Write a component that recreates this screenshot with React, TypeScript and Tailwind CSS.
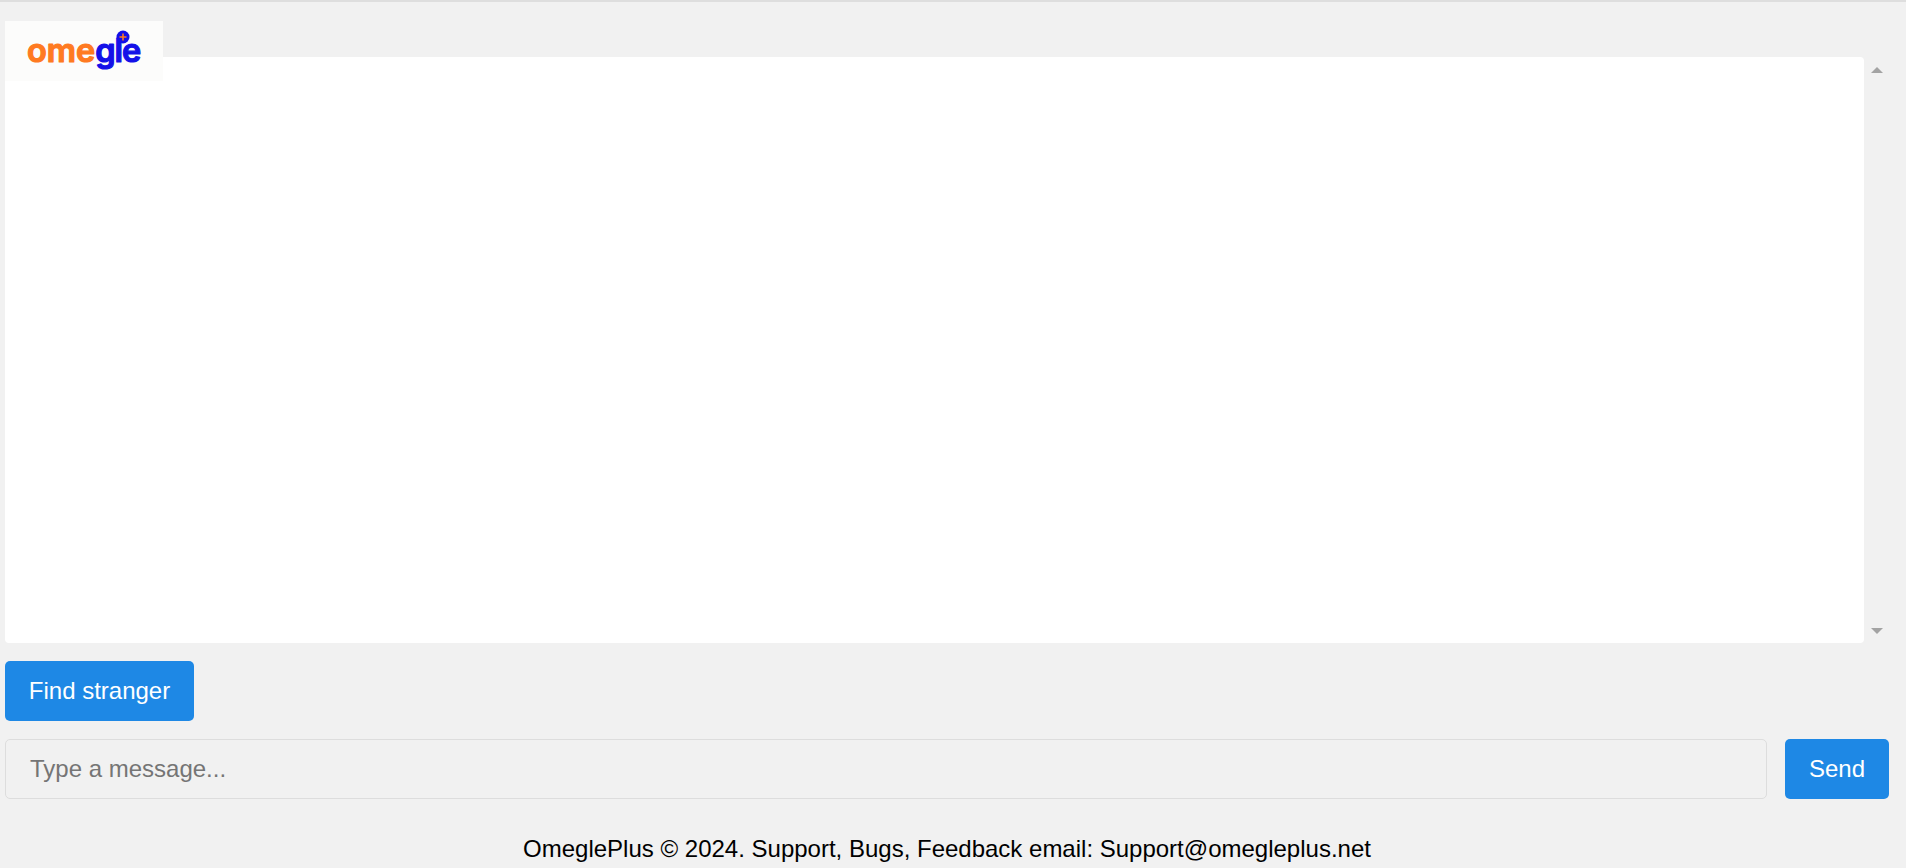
export default function App() {
  return (
    <div className="relative h-[868px] overflow-hidden border-t-2 border-[#dedede] bg-[#f1f1f1] pl-[5px] pr-[17px] pt-[55px] font-['Liberation_Sans',Arial,sans-serif] text-black">
      <div className="absolute left-[5px] top-[19px] flex h-[60px] w-[158px] items-center justify-center bg-[#fcfcfb]">
        <svg width="158" height="60" viewBox="0 0 158 60" aria-label="omegle logo">
          <text x="22" y="41" fontFamily="Inter, sans-serif" fontSize="32.5" fontWeight="600" strokeWidth="1.2" strokeLinejoin="round">
            <tspan fill="#ff7a21" stroke="#ff7a21">ome</tspan>
            <tspan fill="#1410e8" stroke="#1410e8" letterSpacing="-1">gle</tspan>
          </text>
          <circle cx="118" cy="16" r="6.5" fill="#1410e8" />
          <path d="M114.5 16h7M118 12.5v7" stroke="#ff7a21" strokeWidth="1.6" />
        </svg>
      </div>
      <div className="flex h-[586px]">
        <div className="flex-1 rounded-[4px] bg-white" />
        <div className="flex w-[25px] flex-col items-center justify-between bg-[#f1f1f1] pb-[9px] pt-[10px]">
          <svg width="12" height="6" viewBox="0 0 12 6"><path d="M6 0l6 6H0z" fill="#a3a3a3" /></svg>
          <svg width="12" height="6" viewBox="0 0 12 6"><path d="M0 0h12L6 6z" fill="#a3a3a3" /></svg>
        </div>
      </div>
      <button className="mt-[18px] block h-[60px] w-[189px] rounded-[5px] bg-[#1e88e5] text-[24px] leading-[60px] text-white">Find stranger</button>
      <div className="mt-[18px] flex gap-[18px]">
        <div className="flex h-[60px] flex-1 items-center rounded-[5px] border border-[#dddddd] pl-[24px] text-[24px] text-[#757575]">Type a message...</div>
        <button className="h-[60px] w-[104px] rounded-[5px] bg-[#1e88e5] text-[24px] text-white">Send</button>
      </div>
      <p className="mt-[36px] text-center text-[24px] leading-[28px]">OmeglePlus © 2024. Support, Bugs, Feedback email: Support@omegleplus.net</p>
    </div>
  );
}
